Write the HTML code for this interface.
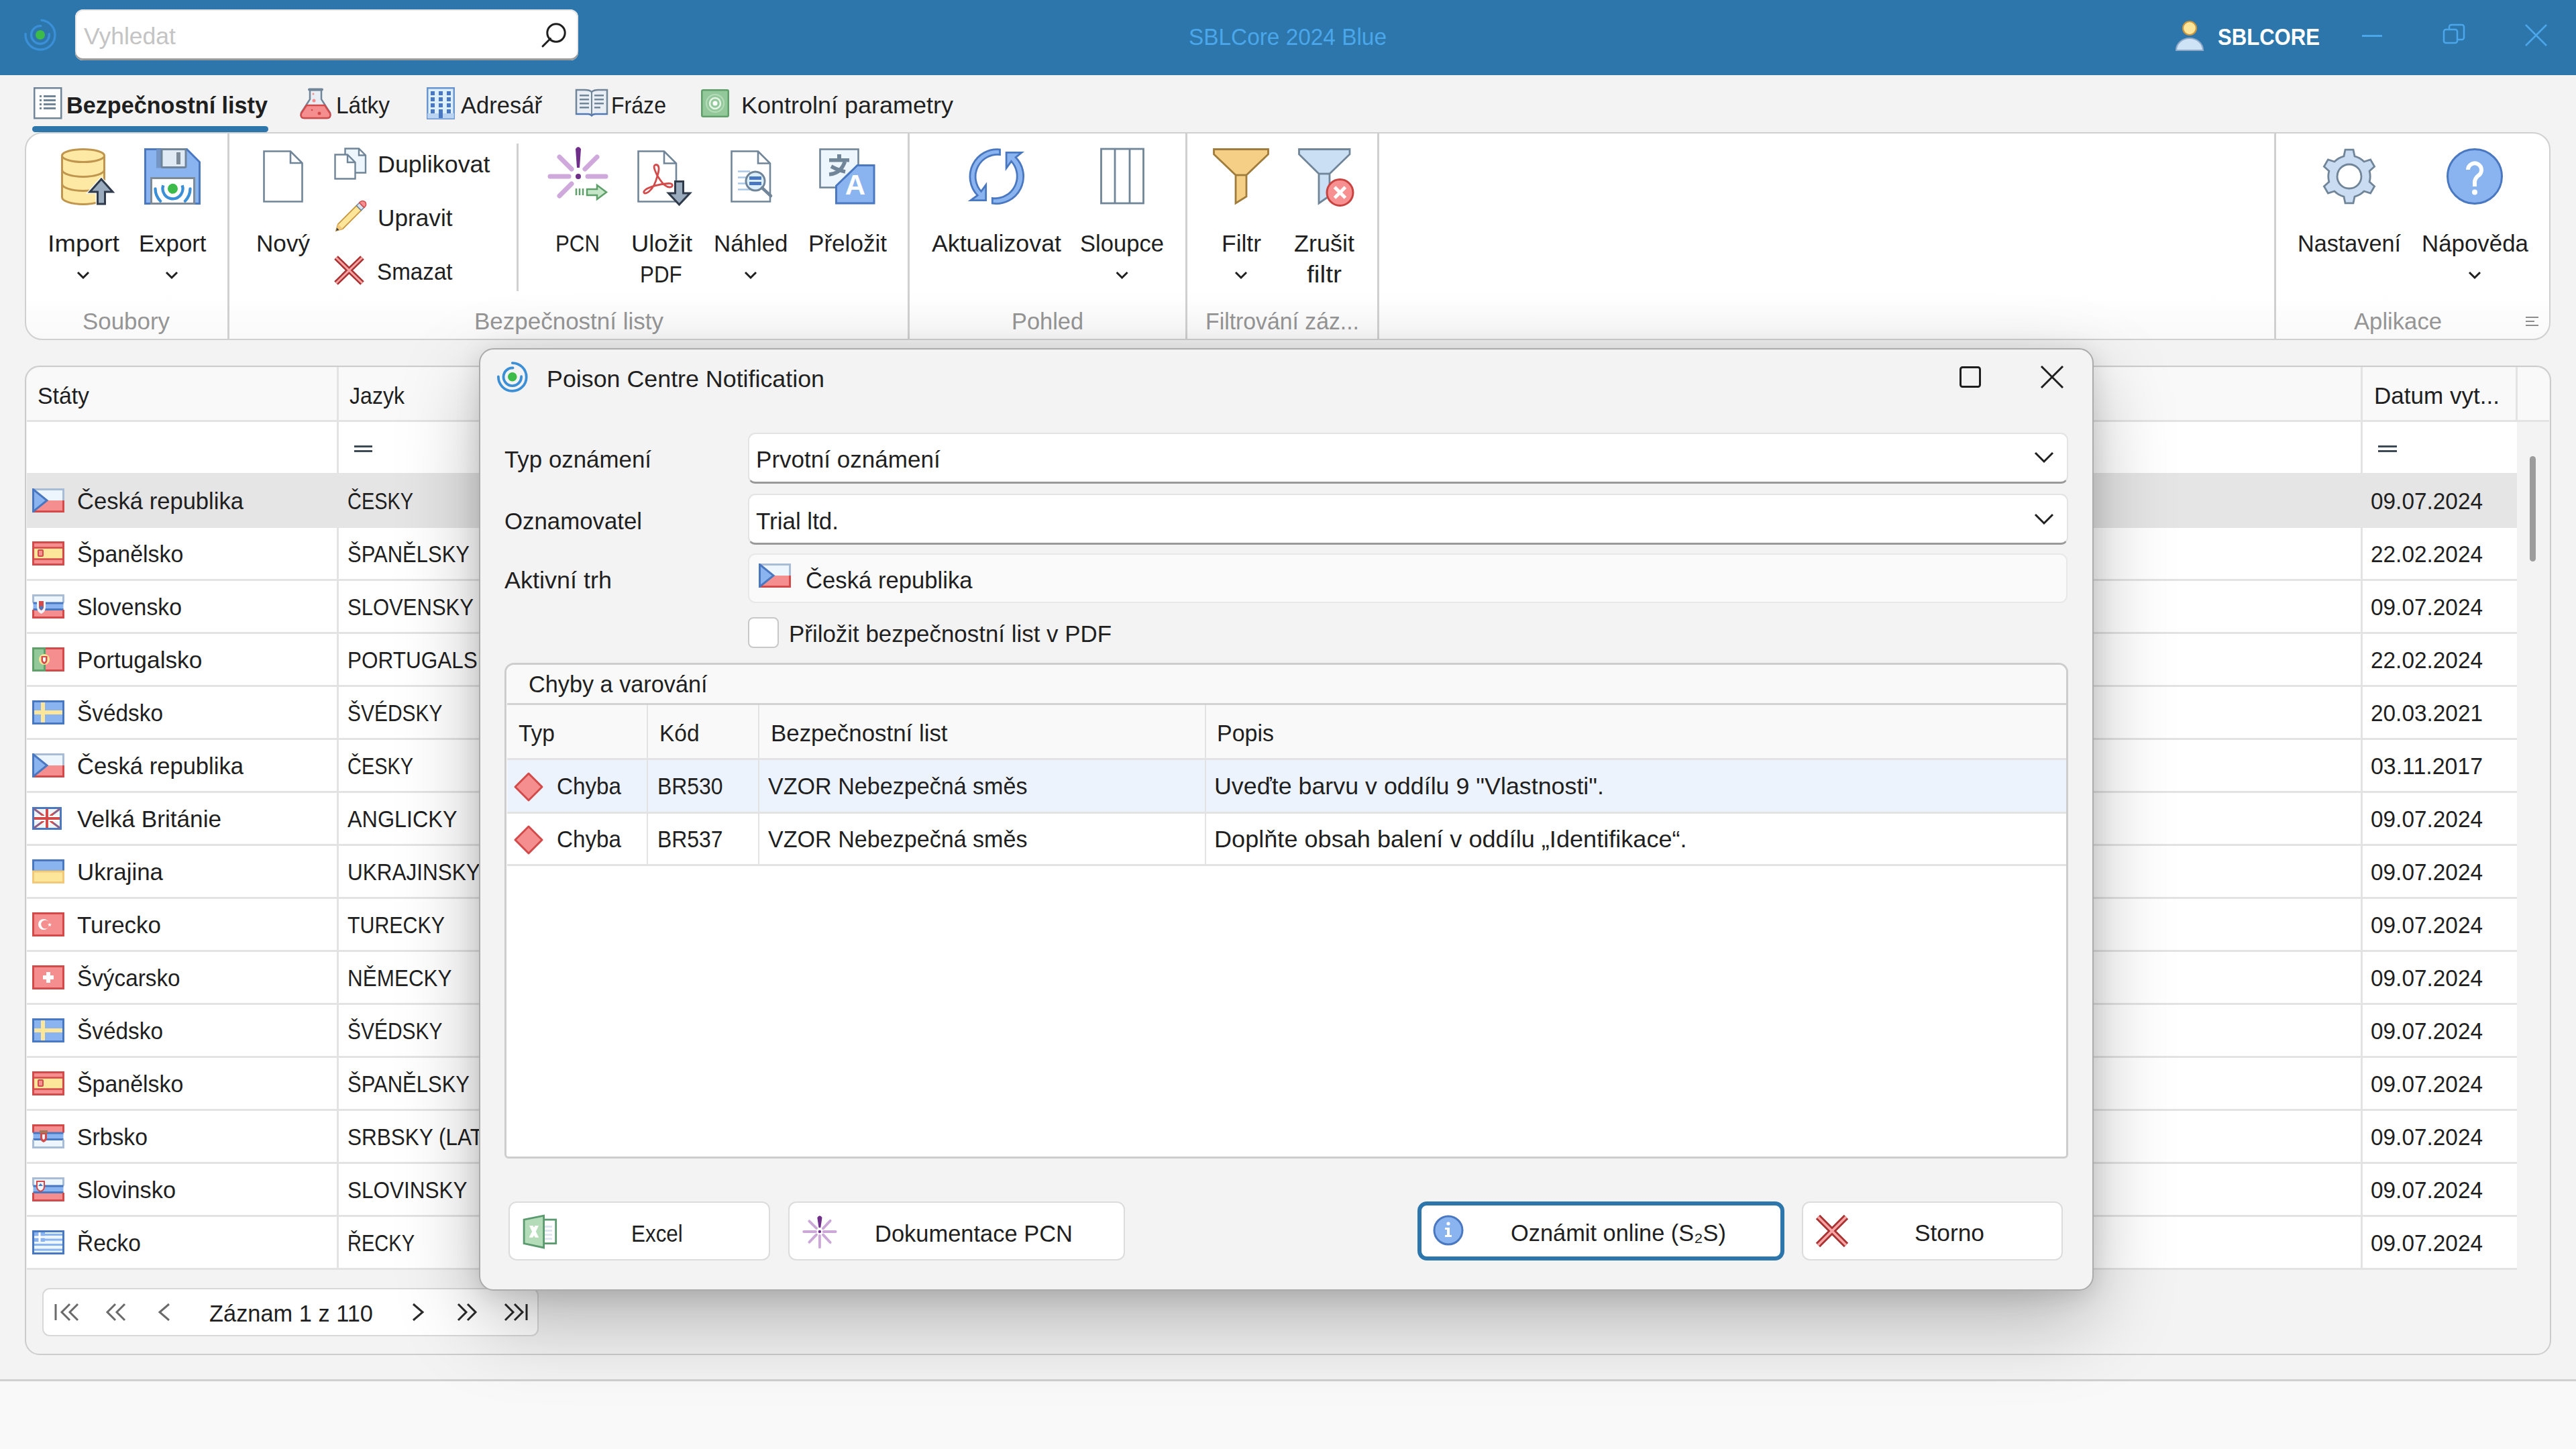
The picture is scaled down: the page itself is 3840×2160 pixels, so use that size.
<!DOCTYPE html>
<html><head><meta charset="utf-8"><style>
html,body{margin:0;padding:0;width:3840px;height:2160px;overflow:hidden;background:#f3f3f3;font-family:"Liberation Sans",sans-serif}
.b{position:absolute;display:block}
.t{position:absolute;white-space:nowrap;font-family:"Liberation Sans",sans-serif}
</style></head><body>
<div class="b" style="left:0px;top:0px;width:3840px;height:112px;background:#2c76ab"></div>
<svg class="b" style="left:30px;top:22px" width="60" height="60" viewBox="0 0 60 60">
<path d="M31.9 8.1 A22 22 0 1 1 8.05 28.5" fill="none" stroke="#3a8fd6" stroke-width="3.4" stroke-linecap="round"/>
<path d="M30.9 16.7 A13.3 13.3 0 1 0 43.2 28.6" fill="none" stroke="#3a8fd6" stroke-width="3.4" stroke-linecap="round"/>
<circle cx="30" cy="30" r="7" fill="#3cba4a"/></svg>
<div class="b" style="left:112px;top:14px;width:750px;height:76px;background:#fff;border-radius:12px;box-shadow:inset 0 -3px 0 #9a9a9a, inset 0 0 0 2px #e6e6e6"></div>
<div class="t" style="left:124.5px;top:36.0px;font-size:35px;line-height:35px;color:#c4c4c4;transform:scaleX(1.0155);transform-origin:0 0;">Vyhledat</div>
<svg class="b" style="left:805px;top:32px" width="42" height="42" viewBox="0 0 42 42"><circle cx="24" cy="17" r="13.2" fill="none" stroke="#1f1f1f" stroke-width="3"/><path d="M15.5 25.5 L4 37" stroke="#1f1f1f" stroke-width="3" stroke-linecap="round"/></svg>
<div class="t" style="left:1772.0px;top:37.4px;font-size:35px;line-height:35px;color:#4ba6ea;transform:scaleX(0.9535);transform-origin:0 0;">SBLCore 2024 Blue</div>
<svg class="b" style="left:3243px;top:30px" width="46" height="48" viewBox="0 0 46 48"><circle cx="21" cy="12" r="10" fill="#fde59a" stroke="#c8963e" stroke-width="2.2"/>
<path d="M1 45 A20 18 0 0 1 41 45 Z" fill="#cfe3f7" stroke="#8fa9c8" stroke-width="2.2"/></svg>
<div class="t" style="left:3306.0px;top:37.4px;font-size:35px;line-height:35px;color:#ffffff;font-weight:bold;transform:scaleX(0.8882);transform-origin:0 0;">SBLCORE</div>
<div class="b" style="left:3521px;top:52px;width:30px;height:3px;background:#4ba6ea"></div>
<svg class="b" style="left:3640px;top:34px" width="36" height="36" viewBox="0 0 36 36"><rect x="3" y="10" width="20" height="20" rx="3" fill="none" stroke="#4ba6ea" stroke-width="2.5"/><path d="M11 10 V6 a3 3 0 0 1 3 -3 H30 a3 3 0 0 1 3 3 V22 a3 3 0 0 1 -3 3 H23" fill="none" stroke="#4ba6ea" stroke-width="2.5"/></svg>
<svg class="b" style="left:3762px;top:34px" width="38" height="38" viewBox="0 0 38 38"><path d="M3 3 L34 34 M34 3 L3 34" stroke="#4ba6ea" stroke-width="2.5"/></svg>
<div class="b" style="left:0px;top:112px;width:3840px;height:2048px;background:#f3f3f3"></div>
<svg class="b" style="left:50px;top:130px" width="43" height="48" viewBox="0 0 43 48"><rect x="1.25" y="1.25" width="40" height="45" fill="#fff" stroke="#718599" stroke-width="2.5"/>
<g fill="#718599"><rect x="9" y="12" width="3" height="3"/><rect x="9" y="18" width="3" height="3"/><rect x="9" y="24" width="3" height="3"/><rect x="9" y="30" width="3" height="3"/>
<rect x="15" y="12" width="18" height="3"/><rect x="15" y="18" width="18" height="3"/><rect x="15" y="24" width="18" height="3"/><rect x="15" y="30" width="18" height="3"/></g></svg>
<div class="t" style="left:99.0px;top:139.4px;font-size:35px;line-height:35px;color:#1f1f1f;font-weight:bold;transform:scaleX(0.9762);transform-origin:0 0;">Bezpečnostní listy</div>
<div class="b" style="left:48px;top:188px;width:352px;height:9px;background:#2c76ab;border-radius:5px"></div>
<svg class="b" style="left:446px;top:130px" width="49" height="48" viewBox="0 0 49 48"><path d="M16 4 V18 L3 38 Q1 46 8 46 H41 Q48 46 46 38 L33 18 V4 Z" fill="#e9eef5" stroke="#718599" stroke-width="2.5"/>
<path d="M11 27 H38 L46 39 Q48 46 41 46 H8 Q1 46 3 39 Z" fill="#f58f8f" stroke="#d24a4a" stroke-width="2.5"/>
<rect x="13" y="1.5" width="23" height="4" rx="2" fill="#718599"/>
<circle cx="22" cy="20" r="2.5" fill="#f58f8f"/><circle cx="21" cy="10" r="1.5" fill="#f58f8f"/><circle cx="30" cy="39" r="2.5" fill="#d24a4a"/><circle cx="19" cy="34" r="1.3" fill="#d24a4a"/></svg>
<div class="t" style="left:501.0px;top:138.9px;font-size:35px;line-height:35px;color:#1f1f1f;transform:scaleX(0.9563);transform-origin:0 0;">Látky</div>
<svg class="b" style="left:636px;top:130px" width="42" height="48" viewBox="0 0 42 48"><rect x="1.25" y="1.25" width="39.5" height="45.5" fill="#dcefff" stroke="#6b95cf" stroke-width="2.5"/>
<rect x="1.25" y="39" width="39.5" height="7.5" fill="#b9d3f0"/>
<g fill="#4a78c0"><rect x="6" y="6" width="6" height="6"/><rect x="18" y="6" width="6" height="6"/><rect x="30" y="6" width="6" height="6"/>
<rect x="6" y="15" width="6" height="6"/><rect x="18" y="15" width="6" height="6"/><rect x="30" y="15" width="6" height="6"/>
<rect x="6" y="24" width="6" height="6"/><rect x="18" y="24" width="6" height="6"/><rect x="30" y="24" width="6" height="6"/>
<rect x="6" y="33" width="6" height="6"/><rect x="30" y="33" width="6" height="6"/><rect x="18" y="33" width="6" height="13"/></g></svg>
<div class="t" style="left:687.0px;top:138.9px;font-size:35px;line-height:35px;color:#1f1f1f;transform:scaleX(0.9873);transform-origin:0 0;">Adresář</div>
<svg class="b" style="left:857px;top:131px" width="50" height="46" viewBox="0 0 50 46"><path d="M2 3 H15 Q22 3 25 6 Q28 3 35 3 H48 V39 H30 Q27 39 25 41 Q23 39 20 39 H2 Z" fill="#e9eef5" stroke="#718599" stroke-width="2.5"/>
<path d="M25 6 V40" stroke="#718599" stroke-width="2"/>
<path d="M2 38 H20 Q23 38 25 41 Q27 38 30 38 H48 V40 H30 Q27 40 25 43 Q23 40 20 40 H2Z" fill="#4a78c0"/>
<g fill="#718599"><rect x="7" y="10" width="14" height="2.5"/><rect x="7" y="16" width="14" height="2.5"/><rect x="7" y="22" width="14" height="2.5"/><rect x="7" y="28" width="14" height="2.5"/>
<rect x="29" y="10" width="14" height="2.5"/><rect x="29" y="16" width="14" height="2.5"/><rect x="29" y="22" width="14" height="2.5"/><rect x="29" y="28" width="9" height="2.5"/></g></svg>
<div class="t" style="left:911.0px;top:138.9px;font-size:35px;line-height:35px;color:#1f1f1f;transform:scaleX(0.9165);transform-origin:0 0;">Fráze</div>
<svg class="b" style="left:1045px;top:133px" width="42" height="42" viewBox="0 0 42 42"><rect x="1.25" y="1.25" width="39.5" height="39.5" rx="2" fill="#93c99a" stroke="#5fa06a" stroke-width="2.5"/>
<circle cx="21" cy="21" r="13" fill="none" stroke="#b5dcb9" stroke-width="2"/><circle cx="21" cy="21" r="8" fill="none" stroke="#e6f4e7" stroke-width="2.5"/><circle cx="21" cy="21" r="3.5" fill="#fff"/></svg>
<div class="t" style="left:1105.0px;top:138.9px;font-size:35px;line-height:35px;color:#1f1f1f;transform:scaleX(1.0281);transform-origin:0 0;">Kontrolní parametry</div>
<div class="b" style="left:37px;top:197px;width:3765px;height:310px;background:linear-gradient(#fff 0,#fff 240px,#f9f9f9 310px);border:2.5px solid #d0d0d0;border-radius:26px;box-sizing:border-box"></div>
<div class="b" style="left:339px;top:199px;width:2.5px;height:306px;background:#d0d0d0"></div>
<div class="b" style="left:1353px;top:199px;width:2.5px;height:306px;background:#d0d0d0"></div>
<div class="b" style="left:1767px;top:199px;width:2.5px;height:306px;background:#d0d0d0"></div>
<div class="b" style="left:2053px;top:199px;width:2.5px;height:306px;background:#d0d0d0"></div>
<div class="b" style="left:3390px;top:199px;width:2.5px;height:306px;background:#d0d0d0"></div>
<div class="b" style="left:770px;top:214px;width:2.5px;height:220px;background:#d0d0d0"></div>
<svg class="b" style="left:0;top:0" width="3840" height="520" viewBox="0 0 3840 520">
<!-- Import database -->
<g transform="translate(88,221)">
<path d="M4.5 11 V73 A31.5 10.5 0 0 0 67.5 73 V11" fill="#fde9a3" stroke="#c0964e" stroke-width="3"/>
<ellipse cx="36" cy="11" rx="31.5" ry="9.5" fill="#fde9a3" stroke="#c0964e" stroke-width="3"/>
<path d="M4.5 32 A31.5 10.5 0 0 0 67.5 32 M4.5 53 A31.5 10.5 0 0 0 67.5 53" fill="none" stroke="#c0964e" stroke-width="3"/>
<path d="M63 46 L80 65 H68.5 V83 H57.5 V65 H46 Z" fill="none" stroke="#fff" stroke-width="5.5" stroke-linejoin="miter"/>
<path d="M63 46 L80 65 H68.5 V83 H57.5 V65 H46 Z" fill="#9aabbd" stroke="#2f3b4b" stroke-width="3" stroke-linejoin="miter"/>
</g>
<!-- Export floppy -->
<g transform="translate(215,221)">
<path d="M1.5 1.5 H63.5 L82.5 20.5 V82.5 H1.5 Z" fill="#8ab4f0" stroke="#4a78c0" stroke-width="3"/>
<rect x="18" y="1.5" width="9" height="28" fill="#7596c4"/>
<rect x="26" y="1.5" width="36" height="27" rx="1.5" fill="#e0eaf5" stroke="#6f8399" stroke-width="3"/>
<rect x="48" y="6" width="6" height="18" fill="#7d8b99"/>
<rect x="10.5" y="44.5" width="64" height="38" fill="#fff" stroke="#7d8b99" stroke-width="3"/>
<circle cx="42.5" cy="60.3" r="7.5" fill="#3cba4a"/>
<path d="M28.4 55.2 A15 15 0 1 0 56.6 55.2" fill="none" stroke="#3a8fd6" stroke-width="4.3"/>
<path d="M16.5 60.3 A26 26 0 0 0 24.1 78.7 M68.5 60.3 A26 26 0 0 1 60.9 78.7" fill="none" stroke="#3a8fd6" stroke-width="4.3" stroke-linecap="round"/>
</g>
<!-- Novy -->
<path d="M393.5 225.5 H433 L450.5 243 V300.5 H393.5 Z M433 225.5 V243 H450.5" fill="#fff" stroke="#718599" stroke-width="2.6"/>
<!-- Duplikovat -->
<path d="M514.5 221.5 H535 L545 231.5 V257.5 H514.5 Z M535 221.5 V231.5 H545" fill="#eef6fd" stroke="#718599" stroke-width="2.4"/>
<path d="M499.5 230.5 H518 L529.5 242 V266.5 H499.5 Z M518 230.5 V242 H529.5" fill="#fff" stroke="#718599" stroke-width="2.4"/>
<!-- Upravit pencil -->
<g transform="translate(501,344) rotate(-45)">
<path d="M0 0 L9 -5 H48 V5 H9 Z" fill="#fde59a" stroke="#c8963e" stroke-width="1.8"/>
<path d="M0 0 L9 -5 V5 Z" fill="#f2c879"/>
<path d="M0 0 L4 -2.2 V2.2 Z" fill="#2f3b4b"/>
<rect x="48" y="-5" width="6" height="10" fill="#d6e3f0" stroke="#718599" stroke-width="1.5"/>
<path d="M54 -5 H56 A5 5 0 0 1 56 5 H54 Z" fill="#f58f8f" stroke="#d24a4a" stroke-width="1.5"/>
</g>
<!-- Smazat X -->
<path d="M501 384 L540 422 M540 384 L501 422" stroke="#a83232" stroke-width="8"/>
<path d="M501 384 L540 422 M540 384 L501 422" stroke="#f7a3a3" stroke-width="3"/>
<!-- PCN -->
<g stroke="#cfa8dc" stroke-width="7" stroke-linecap="round">
<path d="M820 263 H848 M876 263 H903 M834 234 L852 252 M890 234 L872 252 M834 292 L852 274"/>
</g>
<path d="M858 222 Q862 216 866 222 L864 250 H860 Z" fill="#6e2e8a"/>
<circle cx="862" cy="263" r="4" fill="#6e2e8a"/>
<g stroke="#5fa06a" stroke-width="2.5"><path d="M859 281 V291 M864 281 V291 M869 281 V291"/></g>
<path d="M875 282 H890 V276 L904 286.5 L890 297 V291 H875 Z" fill="#c5e6c8" stroke="#5fa06a" stroke-width="2.5"/>
<!-- Ulozit PDF -->
<path d="M951.5 225.5 H990 L1008 243.5 V300.5 H951.5 Z M990 225.5 V243.5 H1008" fill="#fff" stroke="#718599" stroke-width="2.6"/>
<path d="M980 262 C975 252 973 246 978 245.5 C983 245.5 983 253 980 262 C978 270 974 280 968 285 C961 291 957 287 962 283 C968 278 985 274 996 273.5 C1004 273 1004 279 998 279 C993 279 988 274 984 268 Z" fill="none" stroke="#d24a4a" stroke-width="2.8"/>
<path d="M1006.5 270.5 H1018.5 V288 H1028.5 L1012.5 305 L996.5 288 H1006.5 Z" fill="#9aabbd" stroke="#2f3b4b" stroke-width="3"/>
<!-- Nahled -->
<path d="M1090.5 225.5 H1130 L1148 243.5 V300.5 H1090.5 Z M1130 225.5 V243.5 H1148" fill="#fff" stroke="#718599" stroke-width="2.6"/>
<g stroke="#a9c7e8" stroke-width="2.5"><path d="M1100 255.5 H1118 M1100 264.5 H1112 M1100 273.5 H1111 M1100 282.5 H1118"/></g>
<circle cx="1126" cy="270" r="14" fill="#dcefff" stroke="#718599" stroke-width="3"/>
<rect x="1117" y="263" width="18" height="5" fill="#4a78c0"/><rect x="1117" y="271" width="18" height="5" fill="#4a78c0"/>
<path d="M1136 280 L1149 292" stroke="#718599" stroke-width="4.5" stroke-linecap="round"/>
<!-- Prelozit -->
<rect x="1222.5" y="222.5" width="57" height="57" fill="#eef6fd" stroke="#718599" stroke-width="2.6"/>
<g fill="#718599"><rect x="1248" y="230" width="6" height="8"/><rect x="1236" y="236" width="30" height="5.5"/></g><g stroke="#718599" stroke-width="5.5" fill="none"><path d="M1259.5 241 Q1253 259 1236 260"/><path d="M1239 248 Q1250 254 1260 256"/></g>
<path d="M1246.5 277 L1278 246.5 H1303 V303 H1246.5 Z" fill="#8ab4f0" stroke="#4a78c0" stroke-width="3"/>
<text x="1275" y="290" text-anchor="middle" font-family="Liberation Sans" font-weight="bold" font-size="42" fill="#fff">A</text>
<!-- Aktualizovat -->
<path d="M1490.5 222.9 A40.5 40.5 0 0 0 1457.2 291.2 L1447 298.6 H1469.7 V275.6 L1462.6 285.4 A33 33 0 0 1 1490.5 230.5 Z" fill="#8ab4f0" stroke="#4a78c0" stroke-width="2.8" stroke-linejoin="miter"/>
<path d="M1479.3 303.1 A40.5 40.5 0 0 0 1514 234.6 L1523 227.4 H1500.1 V250.6 L1507.5 240.4 A33 33 0 0 1 1479.3 295.5 Z" fill="#8ab4f0" stroke="#4a78c0" stroke-width="2.8" stroke-linejoin="miter"/>
<!-- Sloupce -->
<rect x="1641.5" y="222" width="63" height="81" fill="#fff" stroke="#718599" stroke-width="2.8"/>
<path d="M1662 222 V303 M1684 222 V303" stroke="#718599" stroke-width="2.8"/>
<!-- Filtr -->
<path d="M1809.5 222.5 H1890.5 V230 L1858 261 V293 L1842 303 V261 L1809.5 230 Z" fill="#f5cf85" stroke="#a07c3c" stroke-width="2.8" stroke-linejoin="miter"/>
<path d="M1842 261 H1858" stroke="#a07c3c" stroke-width="2.8"/>
<!-- Zrusit filtr -->
<path d="M1936.5 222.5 H2012 V230 L1982 259 V292 L1966 303 V259 L1936.5 230 Z" fill="#cbdff4" stroke="#718599" stroke-width="2.8"/>
<path d="M1966 259 H1982" stroke="#718599" stroke-width="2.8"/>
<circle cx="1997.5" cy="287" r="19.5" fill="#f79090" stroke="#c8423f" stroke-width="3"/>
<path d="M1989.5 279 L2005.5 295 M2005.5 279 L1989.5 295" stroke="#fff" stroke-width="5"/>
<!-- Nastaveni gear -->
<g transform="translate(3502,263)">
<path id="gear" d="M-22.10 -22.02 A31.2 31.2 0 0 1 -8.02 -30.15 L-5.97 -39.96 L5.97 -39.96 L8.02 -30.15 A31.2 31.2 0 0 1 22.10 -22.02 L31.62 -25.15 L37.59 -14.81 L30.12 -8.13 A31.2 31.2 0 0 1 30.12 8.13 L37.59 14.81 L31.62 25.15 L22.10 22.02 A31.2 31.2 0 0 1 8.02 30.15 L5.97 39.96 L-5.97 39.96 L-8.02 30.15 A31.2 31.2 0 0 1 -22.10 22.02 L-31.62 25.15 L-37.59 14.81 L-30.12 8.13 A31.2 31.2 0 0 1 -30.12 -8.13 L-37.59 -14.81 L-31.62 -25.15 L-22.10 -22.02 Z" fill="#c9dcf2" stroke="#718599" stroke-width="2.8"/>
<circle r="18" fill="#fff" stroke="#718599" stroke-width="2.8"/>
</g>
<!-- Napoveda -->
<circle cx="3689" cy="263" r="40.5" fill="#8ab4f0" stroke="#4a78c0" stroke-width="3"/>
<path d="M3679 253 A10 10 0 1 1 3694 262 Q3689 266 3689 272 V278" fill="none" stroke="#fff" stroke-width="6"/>
<circle cx="3689" cy="286.5" r="4" fill="#fff"/>
</svg>
<div class="t" style="left:71.0px;top:345.0px;font-size:35px;line-height:35px;color:#1f1f1f;transform:scaleX(1.0787);transform-origin:0 0;">Import</div>
<div class="t" style="left:207.0px;top:345.0px;font-size:35px;line-height:35px;color:#1f1f1f;transform:scaleX(0.9935);transform-origin:0 0;">Export</div>
<div class="t" style="left:382.0px;top:345.0px;font-size:35px;line-height:35px;color:#1f1f1f;transform:scaleX(1.0032);transform-origin:0 0;">Nový</div>
<div class="t" style="left:563.0px;top:227.4px;font-size:35px;line-height:35px;color:#1f1f1f;transform:scaleX(1.0250);transform-origin:0 0;">Duplikovat</div>
<div class="t" style="left:563.0px;top:307.4px;font-size:35px;line-height:35px;color:#1f1f1f;transform:scaleX(1.0066);transform-origin:0 0;">Upravit</div>
<div class="t" style="left:562.0px;top:387.4px;font-size:35px;line-height:35px;color:#1f1f1f;transform:scaleX(0.9489);transform-origin:0 0;">Smazat</div>
<div class="t" style="left:828.0px;top:345.0px;font-size:35px;line-height:35px;color:#1f1f1f;transform:scaleX(0.8931);transform-origin:0 0;">PCN</div>
<div class="t" style="left:940.6px;top:345.0px;font-size:35px;line-height:35px;color:#1f1f1f;transform:scaleX(1.0398);transform-origin:0 0;">Uložit</div>
<div class="t" style="left:954.0px;top:391.4px;font-size:35px;line-height:35px;color:#1f1f1f;transform:scaleX(0.8943);transform-origin:0 0;">PDF</div>
<div class="t" style="left:1063.6px;top:345.0px;font-size:35px;line-height:35px;color:#1f1f1f;transform:scaleX(0.9953);transform-origin:0 0;">Náhled</div>
<div class="t" style="left:1205.0px;top:345.0px;font-size:35px;line-height:35px;color:#1f1f1f;transform:scaleX(1.0025);transform-origin:0 0;">Přeložit</div>
<div class="t" style="left:1389.0px;top:345.0px;font-size:35px;line-height:35px;color:#1f1f1f;transform:scaleX(1.0227);transform-origin:0 0;">Aktualizovat</div>
<div class="t" style="left:1610.0px;top:345.0px;font-size:35px;line-height:35px;color:#1f1f1f;transform:scaleX(0.9882);transform-origin:0 0;">Sloupce</div>
<div class="t" style="left:1821.0px;top:345.0px;font-size:35px;line-height:35px;color:#1f1f1f;transform:scaleX(1.0118);transform-origin:0 0;">Filtr</div>
<div class="t" style="left:1929.0px;top:345.0px;font-size:35px;line-height:35px;color:#1f1f1f;transform:scaleX(1.0285);transform-origin:0 0;">Zrušit</div>
<div class="t" style="left:1948.0px;top:391.4px;font-size:35px;line-height:35px;color:#1f1f1f;transform:scaleX(1.1145);transform-origin:0 0;">filtr</div>
<div class="t" style="left:3425.0px;top:345.0px;font-size:35px;line-height:35px;color:#1f1f1f;transform:scaleX(0.9772);transform-origin:0 0;">Nastavení</div>
<div class="t" style="left:3610.0px;top:345.0px;font-size:35px;line-height:35px;color:#1f1f1f;transform:scaleX(0.9964);transform-origin:0 0;">Nápověda</div>
<div class="t" style="left:123.0px;top:460.9px;font-size:35px;line-height:35px;color:#959595;transform:scaleX(0.9972);transform-origin:0 0;">Soubory</div>
<div class="t" style="left:706.6px;top:460.9px;font-size:35px;line-height:35px;color:#959595;transform:scaleX(0.9997);transform-origin:0 0;">Bezpečnostní listy</div>
<div class="t" style="left:1508.0px;top:460.9px;font-size:35px;line-height:35px;color:#959595;transform:scaleX(0.9818);transform-origin:0 0;">Pohled</div>
<div class="t" style="left:1797.0px;top:460.9px;font-size:35px;line-height:35px;color:#959595;transform:scaleX(0.9650);transform-origin:0 0;">Filtrování záz...</div>
<div class="t" style="left:3509.0px;top:460.9px;font-size:35px;line-height:35px;color:#959595;transform:scaleX(0.9902);transform-origin:0 0;">Aplikace</div>
<svg class="b" style="left:0;top:0" width="3840" height="520" viewBox="0 0 3840 520"><path d="M116 406 L124 414 L132 406" fill="none" stroke="#1f1f1f" stroke-width="3"/><path d="M248 406 L256 414 L264 406" fill="none" stroke="#1f1f1f" stroke-width="3"/><path d="M1111 406 L1119 414 L1127 406" fill="none" stroke="#1f1f1f" stroke-width="3"/><path d="M1664.6 406 L1672.6 414 L1680.6 406" fill="none" stroke="#1f1f1f" stroke-width="3"/><path d="M1842 406 L1850 414 L1858 406" fill="none" stroke="#1f1f1f" stroke-width="3"/><path d="M3681 406 L3689 414 L3697 406" fill="none" stroke="#1f1f1f" stroke-width="3"/><path d="M3765 473 H3784 M3765 479 H3778 M3765 485 H3784" stroke="#8c8c8c" stroke-width="2.2"/></svg>
<div class="b" style="left:37px;top:545px;width:3766px;height:1475px;background:#f3f3f3;border:2.8px solid #cccccc;border-radius:22px;box-sizing:border-box;overflow:hidden"></div>
<div class="b" style="left:39.5px;top:547.5px;width:3760px;height:79.5px;background:#f9f9f9;border-radius:20px 20px 0 0"></div>
<div class="b" style="left:39.5px;top:627px;width:3712px;height:1266px;background:#fff"></div>
<div class="b" style="left:3752px;top:628px;width:48px;height:1262px;background:#f3f3f3"></div>
<div class="b" style="left:39.5px;top:626px;width:3760px;height:2.5px;background:#e3e3e3"></div>
<div class="b" style="left:39.5px;top:863px;width:3712px;height:2.6px;background:#e3e3e3"></div>
<div class="b" style="left:39.5px;top:942px;width:3712px;height:2.6px;background:#e3e3e3"></div>
<div class="b" style="left:39.5px;top:1021px;width:3712px;height:2.6px;background:#e3e3e3"></div>
<div class="b" style="left:39.5px;top:1100px;width:3712px;height:2.6px;background:#e3e3e3"></div>
<div class="b" style="left:39.5px;top:1179px;width:3712px;height:2.6px;background:#e3e3e3"></div>
<div class="b" style="left:39.5px;top:1258px;width:3712px;height:2.6px;background:#e3e3e3"></div>
<div class="b" style="left:39.5px;top:1337px;width:3712px;height:2.6px;background:#e3e3e3"></div>
<div class="b" style="left:39.5px;top:1416px;width:3712px;height:2.6px;background:#e3e3e3"></div>
<div class="b" style="left:39.5px;top:1495px;width:3712px;height:2.6px;background:#e3e3e3"></div>
<div class="b" style="left:39.5px;top:1574px;width:3712px;height:2.6px;background:#e3e3e3"></div>
<div class="b" style="left:39.5px;top:1653px;width:3712px;height:2.6px;background:#e3e3e3"></div>
<div class="b" style="left:39.5px;top:1732px;width:3712px;height:2.6px;background:#e3e3e3"></div>
<div class="b" style="left:39.5px;top:1811px;width:3712px;height:2.6px;background:#e3e3e3"></div>
<div class="b" style="left:39.5px;top:1890px;width:3712px;height:2.6px;background:#e3e3e3"></div>
<div class="b" style="left:39.5px;top:1890px;width:3712px;height:3px;background:#e3e3e3"></div>
<div class="b" style="left:502px;top:547px;width:2.5px;height:1346px;background:#e3e3e3"></div>
<div class="b" style="left:3519px;top:547px;width:2.5px;height:1346px;background:#e3e3e3"></div>
<div class="b" style="left:39.5px;top:705px;width:3712px;height:82px;background:#e5e5e5"></div>
<div class="b" style="left:3750px;top:547px;width:2.5px;height:81px;background:#e3e3e3"></div>
<div class="b" style="left:3771px;top:680px;width:8.5px;height:157px;background:#9c9c9c;border-radius:4.5px"></div>
<div class="t" style="left:56.0px;top:571.9px;font-size:35px;line-height:35px;color:#1f1f1f;transform:scaleX(0.9654);transform-origin:0 0;">Státy</div>
<div class="t" style="left:521.0px;top:571.9px;font-size:35px;line-height:35px;color:#1f1f1f;transform:scaleX(0.9165);transform-origin:0 0;">Jazyk</div>
<div class="t" style="left:3539.0px;top:571.9px;font-size:35px;line-height:35px;color:#1f1f1f;transform:scaleX(1.0016);transform-origin:0 0;">Datum vyt...</div>
<div class="b" style="left:528px;top:664px;width:27px;height:3px;background:#3d4a55"></div>
<div class="b" style="left:528px;top:671px;width:27px;height:3px;background:#3d4a55"></div>
<div class="b" style="left:3545px;top:664px;width:28px;height:3px;background:#3d4a55"></div>
<div class="b" style="left:3545px;top:671px;width:28px;height:3px;background:#3d4a55"></div>
<svg class="b" style="left:48px;top:728px" width="48" height="36" viewBox="0 0 48 36"><rect x="1.5" y="1.5" width="45" height="16.5" fill="#eef6fd"/><rect x="1.5" y="18" width="45" height="16.5" fill="#f58f8f"/>
<path d="M1.5 1.5 H46.5 V18" fill="none" stroke="#a9bcd6" stroke-width="3"/><path d="M46.5 18 V34.5 H1.5" fill="none" stroke="#d24a4a" stroke-width="3"/>
<path d="M1.5 1.5 L22 18 L1.5 34.5 Z" fill="#8ab4f0" stroke="#4a78c0" stroke-width="3" stroke-linejoin="miter"/></svg>
<div class="t" style="left:115.0px;top:729.1px;font-size:35px;line-height:35px;color:#1f1f1f;transform:scaleX(0.9882);transform-origin:0 0;">Česká republika</div>
<div class="t" style="left:518.0px;top:729.1px;font-size:35px;line-height:35px;color:#1f1f1f;transform:scaleX(0.8259);transform-origin:0 0;">ČESKY</div>
<div class="t" style="left:3534.0px;top:729.1px;font-size:35px;line-height:35px;color:#1f1f1f;transform:scaleX(0.9533);transform-origin:0 0;">09.07.2024</div>
<svg class="b" style="left:48px;top:807px" width="48" height="36" viewBox="0 0 48 36"><rect x="1.5" y="1.5" width="45" height="33" fill="#f58f8f" stroke="#d24a4a" stroke-width="3"/><rect x="3" y="10" width="42" height="16" fill="#fde59a"/>
<path d="M1.5 9.5 H46.5 M1.5 26.5 H46.5" stroke="#d24a4a" stroke-width="2.5"/><rect x="9" y="13" width="7" height="9" rx="1" fill="#f58f8f" stroke="#d24a4a" stroke-width="2"/></svg>
<div class="t" style="left:115.0px;top:808.1px;font-size:35px;line-height:35px;color:#1f1f1f;transform:scaleX(0.9691);transform-origin:0 0;">Španělsko</div>
<div class="t" style="left:518.0px;top:808.1px;font-size:35px;line-height:35px;color:#1f1f1f;transform:scaleX(0.8854);transform-origin:0 0;">ŠPANĚLSKY</div>
<div class="t" style="left:3534.0px;top:808.1px;font-size:35px;line-height:35px;color:#1f1f1f;transform:scaleX(0.9533);transform-origin:0 0;">22.02.2024</div>
<svg class="b" style="left:48px;top:886px" width="48" height="36" viewBox="0 0 48 36"><rect x="1.5" y="1.5" width="45" height="11" fill="#eef6fd"/><rect x="1.5" y="12" width="45" height="11" fill="#8ab4f0"/><rect x="1.5" y="23" width="45" height="11.5" fill="#f58f8f"/>
<path d="M1.5 12.5 V1.5 H46.5 V12.5" fill="none" stroke="#a9bcd6" stroke-width="3"/><path d="M1.5 13 H46.5 M1.5 22.5 H46.5" stroke="#4a78c0" stroke-width="3"/>
<path d="M1.5 23 V34.5 H46.5 V23" fill="none" stroke="#d24a4a" stroke-width="3"/><path d="M7 8 H20 V19 Q20 26 13.5 29 Q7 26 7 19 Z" fill="#eef6fd"/><path d="M10 10 H17 V19 Q17 22 13.5 24 Q10 22 10 19 Z" fill="#d24a4a"/><path d="M10.5 19 L13.5 17 L16.5 19 Q16 22 13.5 23.5 Q11 22 10.5 19Z" fill="#4a78c0"/></svg>
<div class="t" style="left:115.0px;top:887.1px;font-size:35px;line-height:35px;color:#1f1f1f;transform:scaleX(0.9660);transform-origin:0 0;">Slovensko</div>
<div class="t" style="left:518.0px;top:887.1px;font-size:35px;line-height:35px;color:#1f1f1f;transform:scaleX(0.8866);transform-origin:0 0;">SLOVENSKY</div>
<div class="t" style="left:3534.0px;top:887.1px;font-size:35px;line-height:35px;color:#1f1f1f;transform:scaleX(0.9533);transform-origin:0 0;">09.07.2024</div>
<svg class="b" style="left:48px;top:965px" width="48" height="36" viewBox="0 0 48 36"><rect x="1.5" y="1.5" width="45" height="33" fill="#f58f8f" stroke="#d24a4a" stroke-width="3"/><rect x="1.5" y="1.5" width="17" height="33" fill="#93c99a" stroke="#5fa06a" stroke-width="3"/>
<circle cx="18" cy="18" r="8" fill="#fde59a"/><path d="M13.5 13 H22.5 V19 Q22.5 23 18 25 Q13.5 23 13.5 19 Z" fill="#d24a4a"/><path d="M16 15 H20 V19 Q20 21 18 22 Q16 21 16 19Z" fill="#fff"/></svg>
<div class="t" style="left:115.0px;top:966.1px;font-size:35px;line-height:35px;color:#1f1f1f;transform:scaleX(1.0085);transform-origin:0 0;">Portugalsko</div>
<div class="t" style="left:518.0px;top:966.1px;font-size:35px;line-height:35px;color:#1f1f1f;transform:scaleX(0.9000);transform-origin:0 0;">PORTUGALSKY</div>
<div class="t" style="left:3534.0px;top:966.1px;font-size:35px;line-height:35px;color:#1f1f1f;transform:scaleX(0.9533);transform-origin:0 0;">22.02.2024</div>
<svg class="b" style="left:48px;top:1044px" width="48" height="36" viewBox="0 0 48 36"><rect x="1.5" y="1.5" width="45" height="33" fill="#8ab4f0" stroke="#4a78c0" stroke-width="3"/><rect x="13" y="3" width="6" height="30" fill="#fde59a"/><rect x="3" y="15" width="42" height="6" fill="#fde59a"/></svg>
<div class="t" style="left:115.0px;top:1045.1px;font-size:35px;line-height:35px;color:#1f1f1f;transform:scaleX(0.9535);transform-origin:0 0;">Švédsko</div>
<div class="t" style="left:518.0px;top:1045.1px;font-size:35px;line-height:35px;color:#1f1f1f;transform:scaleX(0.8563);transform-origin:0 0;">ŠVÉDSKY</div>
<div class="t" style="left:3534.0px;top:1045.1px;font-size:35px;line-height:35px;color:#1f1f1f;transform:scaleX(0.9533);transform-origin:0 0;">20.03.2021</div>
<svg class="b" style="left:48px;top:1123px" width="48" height="36" viewBox="0 0 48 36"><rect x="1.5" y="1.5" width="45" height="16.5" fill="#eef6fd"/><rect x="1.5" y="18" width="45" height="16.5" fill="#f58f8f"/>
<path d="M1.5 1.5 H46.5 V18" fill="none" stroke="#a9bcd6" stroke-width="3"/><path d="M46.5 18 V34.5 H1.5" fill="none" stroke="#d24a4a" stroke-width="3"/>
<path d="M1.5 1.5 L22 18 L1.5 34.5 Z" fill="#8ab4f0" stroke="#4a78c0" stroke-width="3" stroke-linejoin="miter"/></svg>
<div class="t" style="left:115.0px;top:1124.1px;font-size:35px;line-height:35px;color:#1f1f1f;transform:scaleX(0.9882);transform-origin:0 0;">Česká republika</div>
<div class="t" style="left:518.0px;top:1124.1px;font-size:35px;line-height:35px;color:#1f1f1f;transform:scaleX(0.8259);transform-origin:0 0;">ČESKY</div>
<div class="t" style="left:3534.0px;top:1124.1px;font-size:35px;line-height:35px;color:#1f1f1f;transform:scaleX(0.9677);transform-origin:0 0;">03.11.2017</div>
<svg class="b" style="left:48px;top:1203px" width="44" height="34" viewBox="0 0 44 34"><rect x="1.5" y="1.5" width="41" height="31" fill="#eef6fd" stroke="#4a78c0" stroke-width="3"/>
<path d="M3 3 L41 31 M41 3 L3 31" stroke="#d24a4a" stroke-width="3"/><path d="M22 3 V31 M3 17 H41" stroke="#fff" stroke-width="8"/><path d="M22 3 V31 M3 17 H41" stroke="#d24a4a" stroke-width="4"/>
<path d="M3 3 L12 10 M41 3 L32 10 M3 31 L12 24 M41 31 L32 24" stroke="#4a78c0" stroke-width="1.5"/></svg>
<div class="t" style="left:115.0px;top:1203.1px;font-size:35px;line-height:35px;color:#1f1f1f;transform:scaleX(1.0046);transform-origin:0 0;">Velká Británie</div>
<div class="t" style="left:518.0px;top:1203.1px;font-size:35px;line-height:35px;color:#1f1f1f;transform:scaleX(0.9237);transform-origin:0 0;">ANGLICKY</div>
<div class="t" style="left:3534.0px;top:1203.1px;font-size:35px;line-height:35px;color:#1f1f1f;transform:scaleX(0.9533);transform-origin:0 0;">09.07.2024</div>
<svg class="b" style="left:48px;top:1281px" width="48" height="36" viewBox="0 0 48 36"><rect x="1.5" y="1.5" width="45" height="16.5" fill="#8ab4f0" stroke="#4a78c0" stroke-width="3"/><rect x="1.5" y="18" width="45" height="16.5" fill="#fde59a" stroke="#f2c879" stroke-width="3"/></svg>
<div class="t" style="left:115.0px;top:1282.1px;font-size:35px;line-height:35px;color:#1f1f1f;transform:scaleX(0.9970);transform-origin:0 0;">Ukrajina</div>
<div class="t" style="left:518.0px;top:1282.1px;font-size:35px;line-height:35px;color:#1f1f1f;transform:scaleX(0.9000);transform-origin:0 0;">UKRAJINSKY</div>
<div class="t" style="left:3534.0px;top:1282.1px;font-size:35px;line-height:35px;color:#1f1f1f;transform:scaleX(0.9533);transform-origin:0 0;">09.07.2024</div>
<svg class="b" style="left:48px;top:1360px" width="48" height="36" viewBox="0 0 48 36"><rect x="1.5" y="1.5" width="45" height="33" fill="#f58f8f" stroke="#d24a4a" stroke-width="3"/><circle cx="17" cy="18" r="8" fill="#fff"/><circle cx="19.5" cy="18" r="6.3" fill="#f58f8f"/>
<path d="M26 15.5 L26.8 17.5 L29 17.6 L27.3 19 L27.9 21 L26 19.9 L24.2 21 L24.8 19 L23 17.6 L25.2 17.5Z" fill="#fff"/></svg>
<div class="t" style="left:115.0px;top:1361.1px;font-size:35px;line-height:35px;color:#1f1f1f;transform:scaleX(0.9989);transform-origin:0 0;">Turecko</div>
<div class="t" style="left:518.0px;top:1361.1px;font-size:35px;line-height:35px;color:#1f1f1f;transform:scaleX(0.8670);transform-origin:0 0;">TURECKY</div>
<div class="t" style="left:3534.0px;top:1361.1px;font-size:35px;line-height:35px;color:#1f1f1f;transform:scaleX(0.9533);transform-origin:0 0;">09.07.2024</div>
<svg class="b" style="left:48px;top:1439px" width="48" height="36" viewBox="0 0 48 36"><rect x="1.5" y="1.5" width="45" height="33" fill="#f58f8f" stroke="#d24a4a" stroke-width="3"/><rect x="21" y="10" width="6" height="16" fill="#fff"/><rect x="16" y="15" width="16" height="6" fill="#fff"/></svg>
<div class="t" style="left:115.0px;top:1440.1px;font-size:35px;line-height:35px;color:#1f1f1f;transform:scaleX(0.9515);transform-origin:0 0;">Švýcarsko</div>
<div class="t" style="left:518.0px;top:1440.1px;font-size:35px;line-height:35px;color:#1f1f1f;transform:scaleX(0.8989);transform-origin:0 0;">NĚMECKY</div>
<div class="t" style="left:3534.0px;top:1440.1px;font-size:35px;line-height:35px;color:#1f1f1f;transform:scaleX(0.9533);transform-origin:0 0;">09.07.2024</div>
<svg class="b" style="left:48px;top:1518px" width="48" height="36" viewBox="0 0 48 36"><rect x="1.5" y="1.5" width="45" height="33" fill="#8ab4f0" stroke="#4a78c0" stroke-width="3"/><rect x="13" y="3" width="6" height="30" fill="#fde59a"/><rect x="3" y="15" width="42" height="6" fill="#fde59a"/></svg>
<div class="t" style="left:115.0px;top:1519.1px;font-size:35px;line-height:35px;color:#1f1f1f;transform:scaleX(0.9535);transform-origin:0 0;">Švédsko</div>
<div class="t" style="left:518.0px;top:1519.1px;font-size:35px;line-height:35px;color:#1f1f1f;transform:scaleX(0.8563);transform-origin:0 0;">ŠVÉDSKY</div>
<div class="t" style="left:3534.0px;top:1519.1px;font-size:35px;line-height:35px;color:#1f1f1f;transform:scaleX(0.9533);transform-origin:0 0;">09.07.2024</div>
<svg class="b" style="left:48px;top:1597px" width="48" height="36" viewBox="0 0 48 36"><rect x="1.5" y="1.5" width="45" height="33" fill="#f58f8f" stroke="#d24a4a" stroke-width="3"/><rect x="3" y="10" width="42" height="16" fill="#fde59a"/>
<path d="M1.5 9.5 H46.5 M1.5 26.5 H46.5" stroke="#d24a4a" stroke-width="2.5"/><rect x="9" y="13" width="7" height="9" rx="1" fill="#f58f8f" stroke="#d24a4a" stroke-width="2"/></svg>
<div class="t" style="left:115.0px;top:1598.1px;font-size:35px;line-height:35px;color:#1f1f1f;transform:scaleX(0.9691);transform-origin:0 0;">Španělsko</div>
<div class="t" style="left:518.0px;top:1598.1px;font-size:35px;line-height:35px;color:#1f1f1f;transform:scaleX(0.8854);transform-origin:0 0;">ŠPANĚLSKY</div>
<div class="t" style="left:3534.0px;top:1598.1px;font-size:35px;line-height:35px;color:#1f1f1f;transform:scaleX(0.9533);transform-origin:0 0;">09.07.2024</div>
<svg class="b" style="left:48px;top:1676px" width="48" height="36" viewBox="0 0 48 36"><rect x="1.5" y="1.5" width="45" height="11" fill="#f58f8f"/><rect x="1.5" y="12" width="45" height="11" fill="#8ab4f0"/><rect x="1.5" y="23" width="45" height="11.5" fill="#eef6fd"/>
<path d="M1.5 12.5 V1.5 H46.5 V12.5" fill="none" stroke="#d24a4a" stroke-width="3"/><path d="M1.5 13 H46.5 M1.5 22.5 H46.5" stroke="#4a78c0" stroke-width="3"/>
<path d="M1.5 23 V34.5 H46.5 V23" fill="none" stroke="#a9bcd6" stroke-width="3"/>
<rect x="11" y="9" width="12" height="4" fill="#a0785a"/><path d="M12 13 H22 V20 Q22 25 17 27 Q12 25 12 20 Z" fill="#d24a4a"/><path d="M15 15 H19 V20 Q19 22 17 23 Q15 22 15 20Z" fill="#eef6fd"/></svg>
<div class="t" style="left:115.0px;top:1677.1px;font-size:35px;line-height:35px;color:#1f1f1f;transform:scaleX(0.9639);transform-origin:0 0;">Srbsko</div>
<div class="t" style="left:518.0px;top:1677.1px;font-size:35px;line-height:35px;color:#1f1f1f;transform:scaleX(0.9000);transform-origin:0 0;">SRBSKY (LATINKA)</div>
<div class="t" style="left:3534.0px;top:1677.1px;font-size:35px;line-height:35px;color:#1f1f1f;transform:scaleX(0.9533);transform-origin:0 0;">09.07.2024</div>
<svg class="b" style="left:48px;top:1755px" width="48" height="36" viewBox="0 0 48 36"><rect x="1.5" y="1.5" width="45" height="11" fill="#eef6fd"/><rect x="1.5" y="12" width="45" height="11" fill="#8ab4f0"/><rect x="1.5" y="23" width="45" height="11.5" fill="#f58f8f"/>
<path d="M1.5 12.5 V1.5 H46.5 V12.5" fill="none" stroke="#a9bcd6" stroke-width="3"/><path d="M1.5 13 H46.5 M1.5 22.5 H46.5" stroke="#4a78c0" stroke-width="3"/>
<path d="M1.5 23 V34.5 H46.5 V23" fill="none" stroke="#d24a4a" stroke-width="3"/><path d="M7 6 H18 V14 Q18 19 12.5 21 Q7 19 7 14 Z" fill="#eef6fd" stroke="#d24a4a" stroke-width="2"/><path d="M9 13 L12.5 9 L16 13 Z" fill="#4a78c0"/></svg>
<div class="t" style="left:115.0px;top:1756.1px;font-size:35px;line-height:35px;color:#1f1f1f;transform:scaleX(0.9813);transform-origin:0 0;">Slovinsko</div>
<div class="t" style="left:518.0px;top:1756.1px;font-size:35px;line-height:35px;color:#1f1f1f;transform:scaleX(0.9000);transform-origin:0 0;">SLOVINSKY</div>
<div class="t" style="left:3534.0px;top:1756.1px;font-size:35px;line-height:35px;color:#1f1f1f;transform:scaleX(0.9533);transform-origin:0 0;">09.07.2024</div>
<svg class="b" style="left:48px;top:1834px" width="48" height="36" viewBox="0 0 48 36"><rect x="1.5" y="1.5" width="45" height="33" fill="#eef6fd" stroke="#4a78c0" stroke-width="3"/>
<path d="M3 6.5 H45 M3 14 H45 M3 21.5 H45 M3 29 H45" stroke="#8ab4f0" stroke-width="3.2"/><rect x="3" y="3" width="16" height="14" fill="#8ab4f0"/><path d="M11 3 V17 M3 10 H19" stroke="#fff" stroke-width="3"/></svg>
<div class="t" style="left:115.0px;top:1835.1px;font-size:35px;line-height:35px;color:#1f1f1f;transform:scaleX(0.9576);transform-origin:0 0;">Řecko</div>
<div class="t" style="left:518.0px;top:1835.1px;font-size:35px;line-height:35px;color:#1f1f1f;transform:scaleX(0.8292);transform-origin:0 0;">ŘECKY</div>
<div class="t" style="left:3534.0px;top:1835.1px;font-size:35px;line-height:35px;color:#1f1f1f;transform:scaleX(0.9533);transform-origin:0 0;">09.07.2024</div>
<div class="b" style="left:63px;top:1920px;width:740px;height:72px;background:#fff;border:2.5px solid #d8d8d8;border-radius:11px;box-sizing:border-box"></div>
<svg class="b" style="left:0;top:0" width="3840" height="2160" viewBox="0 0 3840 2160"><g fill="none" stroke="#6a6a6a" stroke-width="3">
<path d="M83 1944 V1968"/><path d="M104 1944 L92 1956 L104 1968 M116 1944 L104 1956 L116 1968"/>
<path d="M172 1944 L160 1956 L172 1968 M186 1944 L174 1956 L186 1968"/>
<path d="M252 1944 L238 1956 L252 1968"/>
</g><g fill="none" stroke="#2a2a2a" stroke-width="3">
<path d="M616 1944 L630 1956 L616 1968"/>
<path d="M683 1944 L695 1956 L683 1968 M697 1944 L709 1956 L697 1968"/>
<path d="M753 1944 L765 1956 L753 1968 M767 1944 L779 1956 L767 1968 M785 1944 V1968"/>
</g></svg>
<div class="t" style="left:311.5px;top:1940.4px;font-size:35px;line-height:35px;color:#1f1f1f;transform:scaleX(0.9824);transform-origin:0 0;">Záznam 1 z 110</div>
<div class="b" style="left:0px;top:2056px;width:3840px;height:3px;background:#d0d0d0"></div>
<div class="b" style="left:0px;top:2059px;width:3840px;height:101px;background:#f9f9f9"></div>
<div class="b" style="left:713.5px;top:518.5px;width:2407px;height:1405px;background:#f3f3f3;border:2.8px solid #ababab;border-radius:22px;box-sizing:border-box;box-shadow:0 45px 120px rgba(0,0,0,0.26), 0 6px 36px rgba(0,0,0,0.12)"></div>
<svg class="b" style="left:734px;top:532px" width="60" height="60" viewBox="0 0 60 60">
<path d="M29.8 9.1 A20.9 20.9 0 1 1 8.9 29.5" fill="none" stroke="#3a8fd6" stroke-width="3.8" stroke-linecap="round"/>
<path d="M30.6 16.5 A13.3 13.3 0 1 0 43.1 29.2" fill="none" stroke="#3a8fd6" stroke-width="3.8" stroke-linecap="round"/>
<circle cx="29.8" cy="29.8" r="6.8" fill="#3cba4a"/></svg>
<div class="t" style="left:815.0px;top:547.4px;font-size:35px;line-height:35px;color:#1f1f1f;transform:scaleX(1.0231);transform-origin:0 0;">Poison Centre Notification</div>
<svg class="b" style="left:2915px;top:540px" width="44" height="44" viewBox="0 0 44 44"><rect x="7.5" y="7.5" width="29" height="29" rx="3" fill="none" stroke="#1f1f1f" stroke-width="3"/></svg>
<svg class="b" style="left:3038px;top:541px" width="42" height="42" viewBox="0 0 42 42"><path d="M5 5 L37 37 M37 5 L5 37" stroke="#1f1f1f" stroke-width="3"/></svg>
<div class="t" style="left:752.0px;top:667.4px;font-size:35px;line-height:35px;color:#1f1f1f;transform:scaleX(0.9961);transform-origin:0 0;">Typ oznámení</div>
<div class="t" style="left:752.0px;top:759.4px;font-size:35px;line-height:35px;color:#1f1f1f;transform:scaleX(0.9941);transform-origin:0 0;">Oznamovatel</div>
<div class="t" style="left:752.0px;top:847.4px;font-size:35px;line-height:35px;color:#1f1f1f;transform:scaleX(1.0282);transform-origin:0 0;">Aktivní trh</div>
<div class="b" style="left:1114.5px;top:645px;width:1968px;height:76px;background:#fff;border:2.5px solid #e3e3e3;border-bottom:3px solid #999;border-radius:11px;box-sizing:border-box"></div>
<div class="b" style="left:1114.5px;top:736px;width:1968px;height:75.5px;background:#fff;border:2.5px solid #e3e3e3;border-bottom:3px solid #999;border-radius:11px;box-sizing:border-box"></div>
<div class="b" style="left:1115px;top:825px;width:1967px;height:74px;background:#fafafa;border:2.5px solid #e8e8e8;border-radius:11px;box-sizing:border-box"></div>
<div class="t" style="left:1127.0px;top:667.4px;font-size:35px;line-height:35px;color:#1f1f1f;transform:scaleX(1.0014);transform-origin:0 0;">Prvotní oznámení</div>
<div class="t" style="left:1127.0px;top:759.4px;font-size:35px;line-height:35px;color:#1f1f1f;transform:scaleX(0.9986);transform-origin:0 0;">Trial ltd.</div>
<svg class="b" style="left:3030px;top:668px" width="34" height="28" viewBox="0 0 34 28"><path d="M4 7 L17 20 L30 7" fill="none" stroke="#1f1f1f" stroke-width="3"/></svg>
<svg class="b" style="left:3030px;top:760px" width="34" height="28" viewBox="0 0 34 28"><path d="M4 7 L17 20 L30 7" fill="none" stroke="#1f1f1f" stroke-width="3"/></svg>
<svg class="b" style="left:1131px;top:840px" width="49" height="36" viewBox="0 0 49 36"><rect x="1.5" y="1.5" width="45" height="16.5" fill="#eef6fd"/><rect x="1.5" y="18" width="45" height="16.5" fill="#f58f8f"/>
<path d="M1.5 1.5 H46.5 V18" fill="none" stroke="#a9bcd6" stroke-width="3"/><path d="M46.5 18 V34.5 H1.5" fill="none" stroke="#d24a4a" stroke-width="3"/>
<path d="M1.5 1.5 L22 18 L1.5 34.5 Z" fill="#8ab4f0" stroke="#4a78c0" stroke-width="3" stroke-linejoin="miter"/></svg>
<div class="t" style="left:1200.6px;top:847.4px;font-size:35px;line-height:35px;color:#1f1f1f;transform:scaleX(0.9905);transform-origin:0 0;">Česká republika</div>
<div class="b" style="left:1115px;top:920px;width:46px;height:46px;background:#fff;border:2.5px solid #c8c8c8;border-radius:8px;box-sizing:border-box"></div>
<div class="t" style="left:1176.0px;top:927.0px;font-size:35px;line-height:35px;color:#1f1f1f;transform:scaleX(0.9971);transform-origin:0 0;">Přiložit bezpečnostní list v PDF</div>
<div class="b" style="left:751.5px;top:988px;width:2331px;height:739px;background:#fff;border:3px solid #cdcdcd;border-radius:14px 14px 6px 6px;box-sizing:border-box;overflow:hidden"></div>
<div class="b" style="left:755.5px;top:990.5px;width:2324px;height:58px;background:#f9f9f9;border-radius:12px 12px 0 0"></div>
<div class="b" style="left:755.5px;top:1048px;width:2324px;height:2.5px;background:#d3d3d3"></div>
<div class="b" style="left:755.5px;top:1050.5px;width:2324px;height:80px;background:#f9f9f9"></div>
<div class="b" style="left:755.5px;top:1130px;width:2324px;height:2.5px;background:#e3e3e3"></div>
<div class="b" style="left:755.5px;top:1132.5px;width:2324px;height:78px;background:#edf3fc"></div>
<div class="b" style="left:755.5px;top:1210px;width:2324px;height:2.5px;background:#e3e3e3"></div>
<div class="b" style="left:755.5px;top:1288px;width:2324px;height:2.5px;background:#e3e3e3"></div>
<div class="b" style="left:963.5px;top:1050.5px;width:2.5px;height:238px;background:#e3e3e3"></div>
<div class="b" style="left:1129.5px;top:1050.5px;width:2.5px;height:238px;background:#e3e3e3"></div>
<div class="b" style="left:1795.5px;top:1050.5px;width:2.5px;height:238px;background:#e3e3e3"></div>
<div class="t" style="left:787.6px;top:1002.4px;font-size:35px;line-height:35px;color:#1f1f1f;transform:scaleX(0.9785);transform-origin:0 0;">Chyby a varování</div>
<div class="t" style="left:772.7px;top:1075.4px;font-size:35px;line-height:35px;color:#1f1f1f;transform:scaleX(0.9572);transform-origin:0 0;">Typ</div>
<div class="t" style="left:983.0px;top:1075.4px;font-size:35px;line-height:35px;color:#1f1f1f;transform:scaleX(0.9570);transform-origin:0 0;">Kód</div>
<div class="t" style="left:1149.0px;top:1075.4px;font-size:35px;line-height:35px;color:#1f1f1f;transform:scaleX(0.9959);transform-origin:0 0;">Bezpečnostní list</div>
<div class="t" style="left:1814.0px;top:1075.4px;font-size:35px;line-height:35px;color:#1f1f1f;transform:scaleX(0.9708);transform-origin:0 0;">Popis</div>
<svg class="b" style="left:765px;top:1150px" width="46" height="46" viewBox="0 0 46 46"><path d="M23 3 L43 23 L23 43 L3 23 Z" fill="#f58f8f" stroke="#d24a4a" stroke-width="3" stroke-linejoin="round"/></svg>
<div class="t" style="left:830.4px;top:1154.4px;font-size:35px;line-height:35px;color:#1f1f1f;transform:scaleX(0.9489);transform-origin:0 0;">Chyba</div>
<div class="t" style="left:979.5px;top:1154.4px;font-size:35px;line-height:35px;color:#1f1f1f;transform:scaleX(0.9120);transform-origin:0 0;">BR530</div>
<div class="t" style="left:1145.4px;top:1154.4px;font-size:35px;line-height:35px;color:#1f1f1f;transform:scaleX(0.9740);transform-origin:0 0;">VZOR Nebezpečná směs</div>
<div class="t" style="left:1810.0px;top:1154.4px;font-size:35px;line-height:35px;color:#1f1f1f;transform:scaleX(1.0233);transform-origin:0 0;">Uveďte barvu v oddílu 9 "Vlastnosti".</div>
<svg class="b" style="left:765px;top:1229px" width="46" height="46" viewBox="0 0 46 46"><path d="M23 3 L43 23 L23 43 L3 23 Z" fill="#f58f8f" stroke="#d24a4a" stroke-width="3" stroke-linejoin="round"/></svg>
<div class="t" style="left:830.4px;top:1233.4px;font-size:35px;line-height:35px;color:#1f1f1f;transform:scaleX(0.9489);transform-origin:0 0;">Chyba</div>
<div class="t" style="left:979.5px;top:1233.4px;font-size:35px;line-height:35px;color:#1f1f1f;transform:scaleX(0.9120);transform-origin:0 0;">BR537</div>
<div class="t" style="left:1145.4px;top:1233.4px;font-size:35px;line-height:35px;color:#1f1f1f;transform:scaleX(0.9740);transform-origin:0 0;">VZOR Nebezpečná směs</div>
<div class="t" style="left:1810.0px;top:1233.4px;font-size:35px;line-height:35px;color:#1f1f1f;transform:scaleX(1.0317);transform-origin:0 0;">Doplňte obsah balení v oddílu „Identifikace“.</div>
<div class="b" style="left:758px;top:1791px;width:390px;height:88px;background:#fff;border:2.5px solid #dcdcdc;border-radius:12px;box-sizing:border-box;"></div>
<div class="b" style="left:1175px;top:1791px;width:502px;height:88px;background:#fff;border:2.5px solid #dcdcdc;border-radius:12px;box-sizing:border-box;"></div>
<div class="b" style="left:2113px;top:1791px;width:547px;height:88px;background:#fff;border:6px solid #2c76ab;border-radius:14px;box-sizing:border-box"></div>
<div class="b" style="left:2686px;top:1791px;width:389px;height:88px;background:#fff;border:2.5px solid #dcdcdc;border-radius:12px;box-sizing:border-box;"></div>
<div class="t" style="left:940.7px;top:1821.0px;font-size:35px;line-height:35px;color:#1f1f1f;transform:scaleX(0.8973);transform-origin:0 0;">Excel</div>
<div class="t" style="left:1303.6px;top:1821.0px;font-size:35px;line-height:35px;color:#1f1f1f;transform:scaleX(0.9847);transform-origin:0 0;">Dokumentace PCN</div>
<div class="t" style="left:2251.6px;top:1820.4px;font-size:35px;line-height:35px;color:#1f1f1f;transform:scaleX(0.9823);transform-origin:0 0;">Oznámit online (S₂S)</div>
<div class="t" style="left:2854.0px;top:1820.4px;font-size:35px;line-height:35px;color:#1f1f1f;transform:scaleX(1.0085);transform-origin:0 0;">Storno</div>
<svg class="b" style="left:770px;top:1800px" width="70" height="70" viewBox="0 0 70 70"><rect x="40.6" y="18.1" width="18.1" height="35.5" fill="#fff" stroke="#5a9a6e" stroke-width="2.8"/>
<g stroke="#dde6f0" stroke-width="2.9"><path d="M41.5 28.5 H53 M41.5 34.5 H53 M41.5 40.6 H53 M41.5 46.6 H53"/></g>
<path d="M11.1 18.1 L40.6 12.1 V59.9 L11.1 53.6 Z" fill="#b5dcb9" stroke="#5a9a6e" stroke-width="2.8" stroke-linejoin="miter"/>
<path d="M19 27 H24.5 L26 30 L27.6 27 H33 L28.8 35.8 L33.2 44.7 H27.6 L26 41.5 L24.3 44.7 H18.6 L23.1 35.8 Z" fill="#fff"/></svg>
<svg class="b" style="left:1190px;top:1800px" width="70" height="70" viewBox="0 0 70 70"><g stroke="#cba8d8" stroke-width="3.9" stroke-linecap="round"><path d="M8.2 36 H26.1 M37.7 36 H55.6 M31.9 42 V59.2 M16.4 20.3 L27 30.9 M47.6 19.8 L37 31.2 M16.4 51.7 L27 40.6 M47.6 52 L37 40.6"/></g>
<path d="M28.3 15 Q31.9 9.5 35.5 15 L33.3 30 H30.5 Z" fill="#6e2e8a"/><circle cx="31.9" cy="36" r="2.2" fill="#6e2e8a"/></svg>
<svg class="b" style="left:2135px;top:1810px" width="48" height="48" viewBox="0 0 48 48"><circle cx="24" cy="24" r="21" fill="#8ab4f0" stroke="#4a78c0" stroke-width="3"/>
<circle cx="24" cy="14" r="2.6" fill="#fff"/><path d="M19 20 H26 V31 H29 V34 H19 V31 H22 V23 H19 Z" fill="#fff"/></svg>
<svg class="b" style="left:2706px;top:1810px" width="50" height="50" viewBox="0 0 50 50"><path d="M4 4 L46 46 M46 4 L4 46" stroke="#a83232" stroke-width="9"/><path d="M4 4 L46 46 M46 4 L4 46" stroke="#f7a3a3" stroke-width="3.5"/></svg>
</body></html>
